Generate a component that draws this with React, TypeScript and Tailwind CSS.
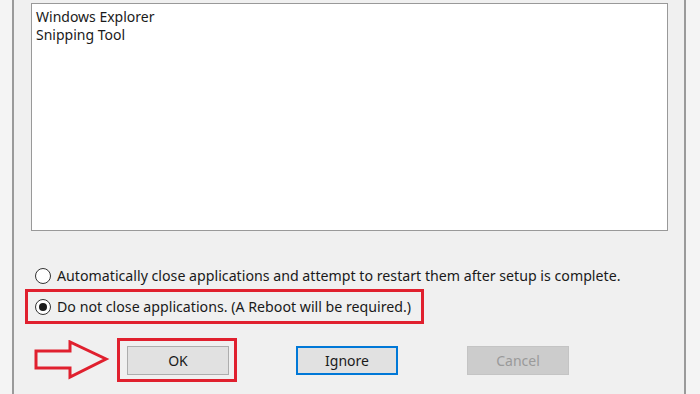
import React from "react";

const font = { fontFamily: '"Noto Sans", "Open Sans", sans-serif' };

function Radio({ checked }: { checked?: boolean }) {
  return (
    <span className="flex h-[16px] w-[16px] shrink-0 items-center justify-center rounded-full border border-[#333333] bg-white">
      {checked && <span className="h-[8px] w-[8px] rounded-full bg-[#1a1a1a]" />}
    </span>
  );
}

export default function App() {
  return (
    <div className="flex h-[394px] w-[700px] overflow-hidden bg-[#f4f4f4] text-[#1a1a1a]" style={font}>
      <div className="ml-[12px] flex h-full w-[674px] flex-col border-x-2 border-x-[#9a9a9a] bg-[#f0f0f0] pl-[17px]">
        <div className="mt-[3px] flex h-[228px] w-[637px] flex-col border border-[#999999] bg-white px-[4px] pt-[4px] text-[14px] leading-[18px]">
          <div>Windows Explorer</div>
          <div>Snipping Tool</div>
        </div>

        <div className="ml-[4px] mt-[36px] flex h-[18px] items-center gap-[6px] text-[14.2px]">
          <Radio />
          <span>Automatically close applications and attempt to restart them after setup is complete.</span>
        </div>

        <div className="ml-[-6px] mt-[4px] flex h-[35px] w-[399px] items-center gap-[6px] border-[3px] border-[#e0202e] pl-[7px] text-[14.2px]">
          <Radio checked />
          <span>Do not close applications. (A Reboot will be required.)</span>
        </div>

        <div className="mt-[14px] flex items-center">
          <svg width="76" height="40" viewBox="0 0 76 40" className="ml-[3px] shrink-0">
            <path
              d="M2 11 L36 11 L36 2 L72 19 L36 37 L36 28 L2 28 Z"
              fill="none"
              stroke="#e0202e"
              strokeWidth="3"
              strokeLinejoin="miter"
            />
          </svg>
          <div className="ml-[7px] flex h-[44px] w-[120px] items-center border-[3px] border-[#e0202e] pl-[7px]">
            <button className="flex h-[29px] w-[102px] items-center justify-center border border-[#adadad] bg-[#e1e1e1] text-[14px]">
              OK
            </button>
          </div>
          <button className="ml-[59px] flex h-[29px] w-[102px] items-center justify-center border-2 border-[#0078d7] bg-[#e1e1e1] text-[14px]">
            Ignore
          </button>
          <button className="ml-[69px] flex h-[29px] w-[102px] items-center justify-center border border-[#c4c4c4] bg-[#cccccc] text-[14px] text-[#9a9a9a]">
            Cancel
          </button>
        </div>
      </div>
    </div>
  );
}
